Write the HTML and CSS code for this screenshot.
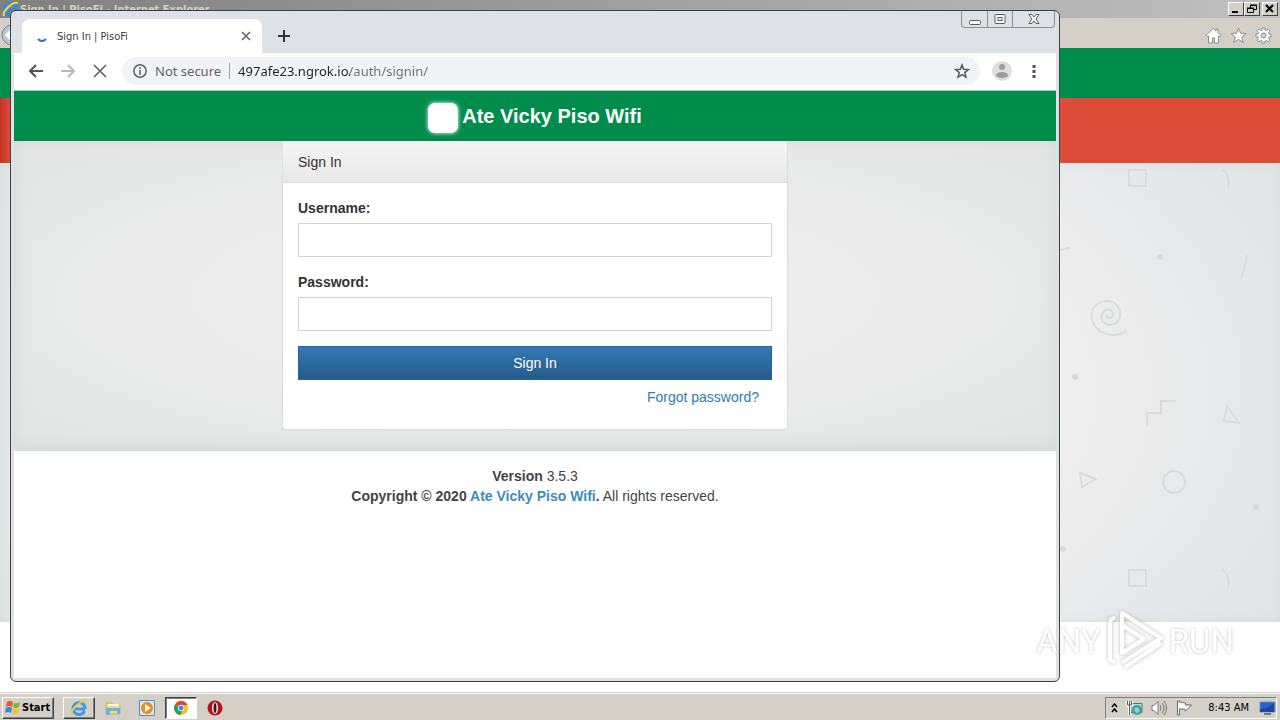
FILE: index.html
```
<!DOCTYPE html>
<html lang="en">
<head>
    <meta charset="UTF-8">
    <meta name="viewport" content="width=device-width, initial-scale=1.0">
    <title>Sign In | PisoFi</title>
    <link rel="stylesheet" href="styles.css">
</head>
<body>

<div class="desktop">

    <!-- Internet Explorer window -->
    <div class="ie">
        <div class="ie-title">
            <svg width="18" height="18" viewBox="0 0 18 18"><path d="M15 10H6M14.5 12a6 6 0 1 1 .5-2" fill="none" stroke="#2b8be0" stroke-width="3"/><path d="M2 16C0 12 10 1 16 3" fill="none" stroke="#f3d34a" stroke-width="2"/></svg>
            <span class="ie-name">Sign In | PisoFi - Internet Explorer</span>
            <button class="win-btn" aria-label="Minimize"><svg width="12" height="10"><path d="M2 8h6" stroke="#000" stroke-width="2"/></svg></button>
            <button class="win-btn" aria-label="Restore"><svg width="12" height="10"><path d="M4.500 4V1.500h6v4H8M4 1h7M1.500 4.500h6v4h-6zM1 4h7" fill="none" stroke="#000"/></svg></button>
            <button class="win-btn close" aria-label="Close"><svg width="12" height="10"><path d="M2 1l7 7M9 1L2 8" stroke="#000" stroke-width="2"/></svg></button>
        </div>
        <div class="ie-tools">
            <button class="ie-back" aria-label="Back"><svg width="24" height="24" viewBox="0 0 24 24"><circle cx="12" cy="12" r="10" fill="#b9c8d6" stroke="#777f88"/><path d="M13 6l-6 6 6 6" fill="none" stroke="#fff" stroke-width="3"/></svg></button>
            <button aria-label="Home"><svg width="17" height="17" viewBox="0 0 17 17"><path d="M8.500 1L1 8.500l1.500 1L3.500 9v7h4v-5h2v5h4V9l1 .5 1.500-1L13 5.500V2h-2v2z" fill="#fff" stroke="#8a8a8a"/></svg></button>
            <button aria-label="Favorites"><svg width="17" height="17" viewBox="0 0 17 17"><path d="M8.500 1l2 5.200 5.500.3-4.300 3.500 1.500 5.500-4.700-3.100-4.700 3.100L5.300 10 1 6.500l5.500-.3z" fill="#fff" stroke="#8a8a8a"/></svg></button>
            <button aria-label="Tools"><svg width="17" height="17" viewBox="0 0 17 17"><path d="M7 1h3v2l1.400.6L13 2.200 15 4.200l-1.500 1.500.6 1.300H16v3h-1.900l-.6 1.400L15 13l-2 2-1.600-1.500-1.400.6V16H7v-1.900l-1.400-.6L4 15l-2-2 1.500-1.600L2.900 10H1V7h1.900l.6-1.300L2 4.200l2-2 1.600 1.400L7 3z" fill="#fff" stroke="#8a8a8a"/><circle cx="8.500" cy="8.500" r="2.500" fill="#d4d0c8" stroke="#8a8a8a"/></svg></button>
        </div>
        <div class="ie-green"></div>
        <div class="ie-red"></div>
        <div class="ie-content">
            <svg width="220" height="460" viewBox="0 0 220 460" fill="none" stroke="#dadddd" stroke-width="2">
                <path d="M69 7h17v16H69zM69 407h17v16H69zM162 6q9 8 6 19M162 406q9 8 6 19M188 92l-7 24M0 87l10-2"/>
                <path d="M87 264v-14h14v-12h15M167 243l-3 15 15 2zM20 310l16 6-14 8z"/>
                <circle cx="114" cy="319" r="11"/>
                <path d="M67 167c-10 9-28 5-34-7-5-13 3-22 15-22 12 1 16 15 8 22-8 5-17-1-14-9 3-7 12-5 11 1-1 4-6 4-6 0"/>
                <g fill="#d6dadb" stroke="none"><circle cx="100" cy="94" r="3"/><circle cx="15" cy="214" r="3"/><circle cx="3" cy="386" r="3"/><circle cx="196" cy="344" r="3"/></g>
            </svg>
        </div>
        <div class="ie-rest"></div>
    </div>

    <!-- Chrome window -->
    <div class="chrome">
        <div class="chrome-buttons">
            <button aria-label="Minimize"><svg width="12" height="12"><rect x=".5" y="7.500" width="11" height="4" rx="1" fill="#fff" stroke="#555b66"/></svg></button>
            <button aria-label="Maximize"><svg width="12" height="12"><rect x="1" y="1.500" width="10" height="9" rx="1" fill="#fff" stroke="#555b66"/><rect x="4" y="4.500" width="4" height="3" fill="none" stroke="#555b66"/></svg></button>
            <button class="wide" aria-label="Close"><svg width="12" height="12" viewBox="0 0 12 12"><path d="M1 1.500h3l2 2.500 2-2.500h3L8 6l3 4.500H8L6 8l-2 2.500H1L4 6z" fill="#fff" stroke="#555b66"/></svg></button>
        </div>
        <div class="tabs">
            <div class="tab">
                <svg class="spinner" width="12" height="12"><path d="M2 9q4 4 8 0" fill="none" stroke="#2f6fdb" stroke-width="2"/></svg>
                <span class="tab-name">Sign In | PisoFi</span>
                <button aria-label="Close tab"><svg width="10" height="10"><path d="M1 1l8 8M9 1L1 9" stroke="#5f6368" stroke-width="1.500"/></svg></button>
            </div>
            <button aria-label="New tab"><svg width="12" height="12"><path d="M6 0v12M0 6h12" stroke="#303236" stroke-width="2"/></svg></button>
        </div>
        <div class="toolbar">
            <button aria-label="Back"><svg width="16" height="16"><path d="M15 8H2M8 2L2 8l6 6" fill="none" stroke="#505357" stroke-width="2"/></svg></button>
            <button aria-label="Forward"><svg width="16" height="16"><path d="M1 8h13M8 2l6 6-6 6" fill="none" stroke="#bababa" stroke-width="2"/></svg></button>
            <button aria-label="Stop"><svg width="16" height="16"><path d="M2 2l12 12M14 2L2 14" stroke="#5f6368" stroke-width="1.700"/></svg></button>
            <div class="omnibox">
                <svg width="14" height="14"><circle cx="7" cy="7" r="6.200" fill="none" stroke="#5f6368" stroke-width="1.500"/><path d="M7 3v2M7 6v5" stroke="#5f6368" stroke-width="1.500"/></svg>
                <span class="not-secure">Not secure</span>
                <input class="url" type="text" aria-label="Address" value="497afe23.ngrok.io/auth/signin/">
                <button aria-label="Bookmark this page"><svg width="16" height="16" viewBox="0 0 16 16"><path d="M8 2l1.700 4.300 4.800.3-3.700 3 1.200 4.600L8 11.700l-4 2.500 1.200-4.600-3.700-3 4.800-.3z" fill="none" stroke="#55585c" stroke-width="1.500"/></svg></button>
            </div>
            <button class="profile" aria-label="Profile"><svg width="20" height="20"><circle cx="10" cy="10" r="10" fill="#dedede"/><circle cx="10" cy="6" r="3" fill="#9b9b9b"/><ellipse cx="10" cy="14" rx="6" ry="3" fill="#9b9b9b"/></svg></button>
            <button class="menu" aria-label="Menu"><svg width="4" height="14"><path d="M.5 1h3v3h-3zM.5 6h3v3h-3zM.5 11h3v3h-3z" fill="#505357"/></svg></button>
        </div>

        <!-- the web page itself -->
        <div class="page">
            <header class="brand">
                <span class="logo"></span>
                <h1>Ate Vicky Piso Wifi</h1>
            </header>
            <main class="backdrop">
                <form class="card">
                    <h2>Sign In</h2>
                    <div class="card-body">
                        <label for="username">Username:</label>
                        <input type="text" id="username">
                        <label for="password">Password:</label>
                        <input type="password" id="password">
                        <button type="button" class="signin">Sign In</button>
                        <a class="forgot" href="#">Forgot password?</a>
                    </div>
                </form>
            </main>
            <footer>
                <div><b>Version</b> 3.5.3</div>
                <div><b>Copyright © 2020 <a href="#">Ate Vicky Piso Wifi</a>.</b> All rights reserved.</div>
            </footer>
        </div>
    </div>

    <!-- watermark -->
    <div class="watermark">
        <span>ANY</span>
        <svg width="60" height="62" viewBox="0 0 60 62" fill="none" stroke="#fff" stroke-width="4" stroke-linejoin="round"><path d="M17 40V3l39 25-39 25M17 16v27l22-14-22-14M10 8q-5 0-5 6v33q0 6 5 4M56 33L20 57"/></svg>
        <span>RUN</span>
    </div>

    <!-- Taskbar -->
    <div class="taskbar">
        <button class="start">
            <svg width="17" height="16" viewBox="0 0 17 16"><path d="M3 2q3-2 6 0L8 7Q5 5 2 7z" fill="#e8582a"/><path d="M10 3q3 1 6-1l-1 5q-3 2-6 0z" fill="#7cb82f"/><path d="M2 8q3-2 6 0l-1 5q-3-2-6 0z" fill="#3d83d6"/><path d="M9 9q3 1 6-1l-1 5q-3 2-6 0z" fill="#f5c02c"/></svg>
            Start
        </button>
        <button class="task raised" aria-label="Internet Explorer"><svg width="18" height="18" viewBox="0 0 18 18"><path d="M15 10H5M14.500 12a6 6 0 1 1 .5-2" fill="none" stroke="#3b9be5" stroke-width="3"/><path d="M2 16C0 12 10 0 16 3" fill="none" stroke="#edc93e" stroke-width="2"/></svg></button>
        <button class="task" aria-label="Explorer"><svg width="16" height="16"><path d="M1 3h6l1 2h7v9H1z" fill="#f0d979" stroke="#cdb04c"/><path d="M1 8h14v6h-3v-3H5v4H1z" fill="#67b6e8"/><path d="M3 5h11" stroke="#fffbe0" stroke-width="2"/></svg></button>
        <button class="task" aria-label="Media Player"><svg width="16" height="16"><path d="M.5.500h15v15H.5z" fill="#d5e9fa" stroke="#4b91cb"/><circle cx="8" cy="8" r="6" fill="#f28a16"/><path d="M6 4l6 4-6 4z" fill="#fff"/></svg></button>
        <button class="task pressed" aria-label="Chrome"><svg width="14" height="14" viewBox="0 0 14 14"><circle cx="7" cy="7" r="7" fill="#f4c20d"/><path d="M7 7L1 3.500A7 7 0 0 1 13.500 4H7z" fill="#db4437"/><path d="M7 7L1 3.500A7 7 0 0 0 6 14l3-5z" fill="#2a9d58"/><circle cx="7" cy="7" r="3.200" fill="#fff"/><circle cx="7" cy="7" r="2.500" fill="#4285f4"/></svg></button>
        <button class="task" aria-label="Opera"><svg width="16" height="16"><circle cx="8" cy="8" r="7.500" fill="#b81218"/><ellipse cx="8" cy="8" rx="3" ry="6" fill="#fff"/><ellipse cx="8" cy="8" rx="1.500" ry="5" fill="#4a1010"/></svg></button>

        <div class="tray">
            <svg width="7" height="10"><path d="M1 4l2.500-3L6 4M1 9l2.500-3L6 9" fill="none" stroke="#000" stroke-width="1.500"/></svg>
            <svg class="net" width="17" height="16"><path d="M5 3.500h11v9H5z" fill="#b8dcd9" stroke="#56706f"/><circle cx="11" cy="10" r="5" fill="#3e9d8d"/><path d="M8 9q3-4 5 0t-3 4" fill="#8fd0e8"/><path d="M1.500 1v4h4V1M3.500 1v14" fill="none" stroke="#fff" stroke-width="3"/><path d="M1.500 1v4h4V1M3.500 1v14" fill="none" stroke="#555"/></svg>
            <svg width="17" height="16"><path d="M1 5.500h2l4-4v13l-4-4H1z" fill="#fff" stroke="#777"/><path d="M9 5q2 3 0 6M11 3q4 5 0 10M13 1q5 7 0 14" fill="none" stroke="#777"/></svg>
            <svg class="flag" width="17" height="16"><path d="M1.500 1v14h2V9h5l1 2 6-6h-6V3L3.500 2V1z" fill="#fff" stroke="#666"/></svg>
            <span class="clock">8:43 AM</span>
            <svg width="17" height="14"><path d="M1 1h15v10H1z" fill="#2b62c9" stroke="#6f93c9"/><path d="M1 8q8 0 14-6v9H1z" fill="#164a9c"/><path d="M5 13h7" stroke="#777" stroke-width="2"/></svg>
        </div>
    </div>
</div>

</body>
</html>
```
FILE: styles.css
```
* { box-sizing: border-box; }
body { margin: 0; font-family: "Liberation Sans", Arial, sans-serif; font-size: 14px; line-height: 20px; color: #333; }
button { padding: 0; border: 0; background: none; font: inherit; color: inherit; }
svg { display: block; flex: none; }
.desktop { position: relative; display: flex; flex-direction: column; height: 100vh; overflow: hidden; background: #fff; }

/* Internet Explorer */
.ie { flex: 1; display: flex; flex-direction: column; min-height: 0; }
.ie-title { display: flex; align-items: center; height: 18px; padding: 0 2px; background: linear-gradient(to right, #808080, #c0c0c0); }
.ie-name { flex: 1; margin-left: 0; color: #d4d0c8; font: bold 11px "DejaVu Sans Condensed", "DejaVu Sans", sans-serif; }
.win-btn { display: flex; align-items: center; justify-content: center; width: 16px; height: 14px; background: #d4d0c8; border: 1px solid; border-color: #fff #404040 #404040 #fff; }
.win-btn.close { margin-left: 2px; }
.ie-tools { display: flex; align-items: center; justify-content: flex-end; gap: 8px; height: 30px; padding: 4px 8px 0 0; background: #d4d0c8; }
.ie-back { margin-right: auto; }
.ie-green { height: 50px; background: #008d4c; }
.ie-red { height: 65px; background: linear-gradient(to right, #c23321, #dd4b39 10px); }
.ie-content { display: flex; justify-content: flex-end; flex: 1; overflow: hidden; background: radial-gradient(ellipse 700px 420px at center, #f0f0f0 55%, #ebebeb 75%, #e6eaec 84%, #e0e4e5 110%); box-shadow: inset 0 0 8px #d3dbd8; }
.ie-rest { height: 70px; background: #fff; }

/* Chrome */
.chrome { position: absolute; top: 10px; right: 220px; bottom: 38px; left: 10px; display: flex; flex-direction: column; padding: 0 3px 3px; background: #dee1e6; border: 1px solid #3c3f44; border-radius: 6px; }
.chrome-buttons { position: absolute; top: 0; right: 4px; display: flex; border: 1px solid #8c9199; border-top: 0; border-radius: 0 0 4px 4px; }
.chrome-buttons button { display: flex; align-items: center; justify-content: center; width: 25px; height: 16px; }
.chrome-buttons button + button { border-left: 1px solid #8c9199; }
.chrome-buttons .wide { width: 42px; }
.tabs { display: flex; align-items: center; gap: 16px; height: 42px; padding: 8px 8px 0; }
.tab { display: flex; align-items: center; width: 240px; height: 34px; padding: 0 11px 0 14px; background: #fff; border-radius: 8px 8px 0 0; font: 11px "DejaVu Sans Condensed", "DejaVu Sans", sans-serif; }
.tab-name { flex: 1; margin-left: 9px; color: #3c4043; }
.toolbar { display: flex; align-items: center; gap: 16px; height: 38px; padding: 0 20px 2px 14px; background: #fff; border-bottom: 1px solid #b5c8bd; }
.omnibox { flex: 1; display: flex; align-items: center; height: 28px; margin-left: -2px; padding: 0 10px 0 11px; background: #f1f3f6; border-radius: 14px; font: 13px "Noto Sans", sans-serif; }
.not-secure { margin-left: 8px; padding-right: 8px; border-right: 1px solid #9aa0a6; line-height: 16px; color: #5f6368; }
/* host is dark, path is grey */
.url { flex: 1; min-width: 0; height: 20px; margin-left: 8px; padding: 0; border: 0; outline: 0; font: inherit; color: transparent; background: linear-gradient(to right, #202124 112px, #6b6f74 112px); -webkit-background-clip: text; background-clip: text; }
.profile { margin-left: -4px; }
.menu { margin-left: 4px; }

/* sign in page */
.page { flex: 1; min-height: 0; overflow: hidden; background: #fff; }
.brand { display: flex; align-items: center; justify-content: center; gap: 4px; height: 50px; background: #008d4c; color: #fff; }
.brand h1 { margin: 0; font-size: 20px; line-height: 50px; }
.logo { width: 30px; height: 30px; margin-top: 4px; background: #fff; border-radius: 7px; box-shadow: 0 0 4px #fff; }
.backdrop { height: 310px; padding-bottom: 21px; background: radial-gradient(ellipse at center, #f2f2f2, #ebebeb 50%, #e3e6e5); box-shadow: inset 0 -4px 16px #cfd8d5; }
.card { width: 506px; height: 289px; margin: 0 auto; background: #fff; border: 1px solid #ddd; border-top: 0; border-radius: 0 0 4px 4px; box-shadow: 0 1px 1px rgba(0, 0, 0, .05); }
.card h2 { margin: 0; padding: 11px 15px 10px; background: linear-gradient(#f5f5f5, #e8e8e8); border-bottom: 1px solid #ddd; font-size: 14px; font-weight: normal; line-height: 20px; }
.card-body { display: flex; flex-direction: column; padding: 15px; }
.card label { margin-bottom: 5px; font-weight: bold; }
.card input { width: 100%; height: 34px; margin: 0 0 15px; padding: 6px 12px; border: 1px solid #d2d2d2; background: #fff; font: inherit; }
.signin { height: 34px; border: 1px solid #2a6496; background: linear-gradient(#337ab7, #265a88); color: #fff; }
.forgot { align-self: flex-end; margin: 7px 13px 0 0; color: #337ab7; text-decoration: none; }
footer { padding: 15px; text-align: center; color: #444; }
footer a { color: #3c8dbc; text-decoration: none; }

.watermark { position: absolute; right: 46px; bottom: 48px; display: flex; align-items: center; gap: 4px; color: #fff; font: 33px Roboto, sans-serif; text-shadow: 0 0 3px #aaa; opacity: .8; }
.watermark svg { filter: drop-shadow(0 0 2px #aaa); }

/* Taskbar */
.taskbar { display: flex; align-items: center; height: 28px; padding: 2px 3px 0 2px; background: #d4d0c8; border-top: 1px solid #d4d0c8; box-shadow: inset 0 1px #fff; font: 11px "DejaVu Sans Condensed", "DejaVu Sans", sans-serif; color: #000; }
.start { display: flex; align-items: center; gap: 1px; width: 52px; height: 22px; margin-right: 9px; padding-left: 1px; border: 1px solid; border-color: #fff #404040 #404040 #fff; box-shadow: inset -1px -1px #808080; font-weight: bold; }
.task { display: flex; align-items: center; justify-content: center; width: 32px; height: 22px; margin-right: 2px; }
.raised { border: 1px solid; border-color: #fff #404040 #404040 #fff; box-shadow: inset -1px -1px #808080; }
.pressed { background: #fff; border: 1px solid; border-color: #404040 #fff #fff #404040; box-shadow: inset 1px 1px #808080; }
.tray { display: flex; align-items: center; gap: 8px; height: 22px; margin-left: auto; padding: 0 0 0 5px; border: 1px solid; border-color: #808080 #fff #fff #808080; }
.clock { margin: 0 2px 0 7px; }
```
